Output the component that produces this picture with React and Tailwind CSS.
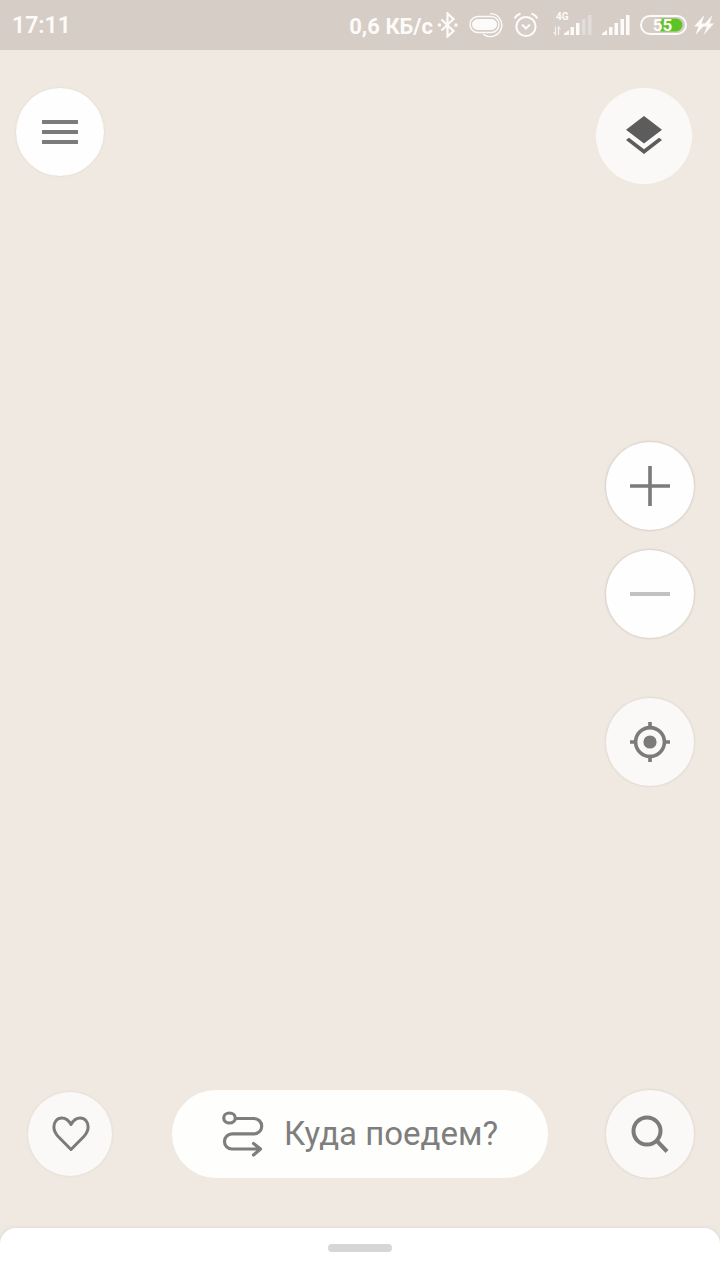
import clsx from "clsx";

function RoundButton({ label, size = "w-22 h-22", className, children }) {
  return (
    <button
      type="button"
      aria-label={label}
      className={clsx("flex shrink-0 items-center justify-center rounded-full", size, className)}
    >
      {children}
    </button>
  );
}

function BluetoothIcon() {
  return (
    <svg width="22" height="26" viewBox="0 0 22 26" fill="none" stroke="currentColor" strokeWidth="2.2">
      <path d="M4.500 7.500L16.500 19l-6 5.500v-23l6 5.500L4.500 18.500" />
      <circle cx="2.400" cy="13" r="1.800" fill="currentColor" stroke="none" />
      <circle cx="19" cy="13" r="1.800" fill="currentColor" stroke="none" />
    </svg>
  );
}

function ToggleIcon() {
  return (
    <svg width="34" height="26" viewBox="0 0 34 26" fill="none" stroke="currentColor">
      <rect x="3.5" y="7.5" width="24" height="10" rx="5" fill="currentColor" />
      <rect x="1" y="4.5" width="29" height="16" rx="8" strokeWidth="1.4" />
      <path d="M21 1.6A11.5 11.5 0 1 1 14 22" strokeWidth="1.4" />
    </svg>
  );
}

function AlarmIcon() {
  return (
    <svg width="26" height="26" viewBox="0 0 26 26" fill="none" stroke="currentColor" strokeWidth="2">
      <circle cx="13" cy="14.500" r="9.6" />
      <path d="M9 12.500l4 4 4-4M1.500 6.500C3 4 5 2.500 7.500 1.500M24.500 6.500C23 4 21 2.500 18.500 1.500" />
    </svg>
  );
}

function MobileDataIcon() {
  return (
    <svg width="39" height="26" viewBox="0 0 39 26" fill="currentColor">
      <text x="3" y="8" fontSize="10" fontWeight="700" fontFamily="Roboto, sans-serif">4G</text>
      <path d="M2.500 14.500v8L.5 20M5.500 23v-8l2 2.500" fill="none" stroke="currentColor" strokeWidth="1.2" opacity=".8" />
      <path d="M11 23v-1.500l5-3.500V23zM17.500 15H21v8h-3.500zM23 11h3.500v12H23z" />
      <path d="M29 7h3.500v16H29zM35 3h3.500v20H35z" opacity=".35" />
    </svg>
  );
}

function SignalIcon() {
  return (
    <svg width="28" height="26" viewBox="0 0 28 26" fill="currentColor">
      <path d="M0 23v-1.500l5-3.500V23zM7 15h3.500v8H7zM12.500 11H16v12h-3.500zM18.500 7H22v16h-3.500zM24 3h3.500v20H24z" />
    </svg>
  );
}

function BatteryIcon() {
  return (
    <svg width="47" height="26" viewBox="0 0 47 26">
      <rect x="1" y="4" width="45" height="18" rx="9" fill="none" stroke="currentColor" strokeWidth="2" />
      <path d="M20.500 6.500H36a6.500 6.500 0 0 1 0 13H20.500z" fill="#5cc427" />
      <text x="22.500" y="19" textAnchor="middle" fontSize="17" fontWeight="700" fontFamily="Roboto, sans-serif" fill="currentColor">
        55
      </text>
    </svg>
  );
}

function ChargingIcon() {
  return (
    <svg width="20" height="26" viewBox="0 0 20 26" fill="currentColor">
      <path d="M10.500 3L0 14.500h4.500L1.500 23 12 11.500H7.500z" />
      <path d="M18.500 3L8.500 14.500H13L9.500 23 20 11.500h-4.500z" />
    </svg>
  );
}

function StatusBar() {
  return (
    <header className="flex h-[50px] items-center justify-between bg-[#d5cdc6] pr-[6px] pl-3 text-[#fdfbf9]">
      <time className="pt-[2px] text-[23px] font-semibold">17:11</time>
      <div className="flex items-center gap-[10px]">
        <div className="flex items-center gap-1">
          <span className="pt-[2px] text-[22px] font-bold">0,6 КБ/с</span>
          <BluetoothIcon />
        </div>
        <ToggleIcon />
        <AlarmIcon />
        <div className="flex items-center gap-[10px] pl-1">
          <MobileDataIcon />
          <SignalIcon />
        </div>
        <div className="flex items-center gap-[7px]">
          <BatteryIcon />
          <ChargingIcon />
        </div>
      </div>
    </header>
  );
}

export default function App() {
  return (
    <div className="flex min-h-screen flex-col bg-[#f0e9e2] font-['Roboto',sans-serif]">
      <StatusBar />

      <main className="flex flex-1 flex-col">
        {/* Menu and map layers */}
        <div className="flex items-start justify-between pt-[38px] pr-7 pl-4">
          <RoundButton label="Меню" className="bg-[#fefefe] text-[#7b7b7b] shadow-[0_0_2px_#d8d0c8]">
            <svg width="36" height="24" viewBox="0 0 36 24" fill="currentColor">
              <path d="M0 0h36v4H0zM0 10h36v4H0zM0 20h36v4H0z" />
            </svg>
          </RoundButton>
          <RoundButton label="Слои" size="w-24 h-24" className="bg-[#faf9f8] text-[#5c5c5c]">
            <svg width="36" height="40" viewBox="0 0 36 40" fill="currentColor">
              <path d="M18 0L36 13.800 18 27.600 0 13.800z" />
              <path d="M0 24l3-2.300 15 11.600 15-11.600 3 2.300-18 14z" />
            </svg>
          </RoundButton>
        </div>

        {/* Zoom and location */}
        <div className="flex flex-1 flex-col items-end justify-center pr-[26px] pb-[46px]">
          <div className="flex flex-col gap-5">
            <RoundButton label="Приблизить" className="bg-[#fefefe] text-[#7b7b7b] shadow-[0_0_2px_1px_#d8d0c8]">
              <svg width="40" height="40" viewBox="0 0 40 40" fill="currentColor">
                <path d="M18.200 0h3.600v18.200H40v3.600H21.800V40h-3.600V21.800H0v-3.600h18.200z" />
              </svg>
            </RoundButton>
            <RoundButton label="Отдалить" className="bg-[#fefefe] text-[#c2c2c2] shadow-[0_0_2px_1px_#d8d0c8]">
              <svg width="40" height="4" viewBox="0 0 40 4" fill="currentColor">
                <path d="M0 0h40v4H0z" />
              </svg>
            </RoundButton>
          </div>
          <RoundButton label="Моё местоположение" className="mt-15 bg-[#faf9f8] text-[#7b7b7b] shadow-[0_0_2px_1px_#e2dad2]">
            <svg width="40" height="40" viewBox="0 0 40 40" fill="none" stroke="currentColor" strokeWidth="3.600">
              <circle cx="20" cy="20" r="14.400" />
              <circle cx="20" cy="20" r="6.600" fill="currentColor" stroke="none" />
              <path d="M20 0v5M20 35v5M0 20h5M35 20h5" />
            </svg>
          </RoundButton>
        </div>

        {/* Favourites, route and search */}
        <div className="flex items-center pr-[26px] pb-[50px] pl-7">
          <RoundButton label="Избранное" size="w-21 h-21" className="bg-[#faf9f8] text-[#7b7b7b] shadow-[0_0_2px_1px_#e7dfd7]">
            <svg width="40" height="36" viewBox="0 0 40 36" fill="none" stroke="currentColor" strokeWidth="3" strokeLinejoin="round">
              <path d="M21 8.500C18.500 4 15 2 11.800 2 7 2 3.900 6 3.900 11c0 4 1.700 6.800 4.500 9.800L21 33.500l12.600-12.700c2.800-3 4.500-5.800 4.500-9.800 0-5-3.100-9-7.900-9-3.200 0-6.700 2-9.200 6.500z" />
            </svg>
          </RoundButton>
          <button
            type="button"
            className="mr-[58px] ml-15 flex h-22 flex-1 items-center justify-center gap-5 rounded-full bg-[#fefefc] text-[33px] text-[#7e7e7e]"
          >
            <svg width="42" height="46" viewBox="0 0 42 46" fill="none" stroke="currentColor" strokeWidth="3.200" strokeLinecap="round" strokeLinejoin="round">
              <ellipse cx="7.500" cy="7" rx="5.800" ry="5" />
              <path d="M13.500 7.500H32a7.700 7.700 0 0 1 0 15.400H10a7.500 7.500 0 0 0 0 15.100h28M31.500 32.500l7 5.500-7 6" />
            </svg>
            Куда поедем?
          </button>
          <RoundButton label="Поиск" className="bg-[#faf9f8] text-[#7b7b7b] shadow-[0_0_2px_1px_#e2dad2]">
            <svg width="38" height="38" viewBox="0 0 38 38" fill="none" stroke="currentColor" strokeWidth="4">
              <circle cx="16" cy="16" r="13.500" />
              <path d="M25.500 25.500L36 36.500" />
            </svg>
          </RoundButton>
        </div>
      </main>

      {/* Bottom sheet */}
      <section className="h-[52px] rounded-t-2xl bg-white pt-4 shadow-[0_0_4px_#ddd5cc]">
        <div className="mx-auto h-2 w-16 rounded-full bg-[#d6d6d6]" />
      </section>
    </div>
  );
}
